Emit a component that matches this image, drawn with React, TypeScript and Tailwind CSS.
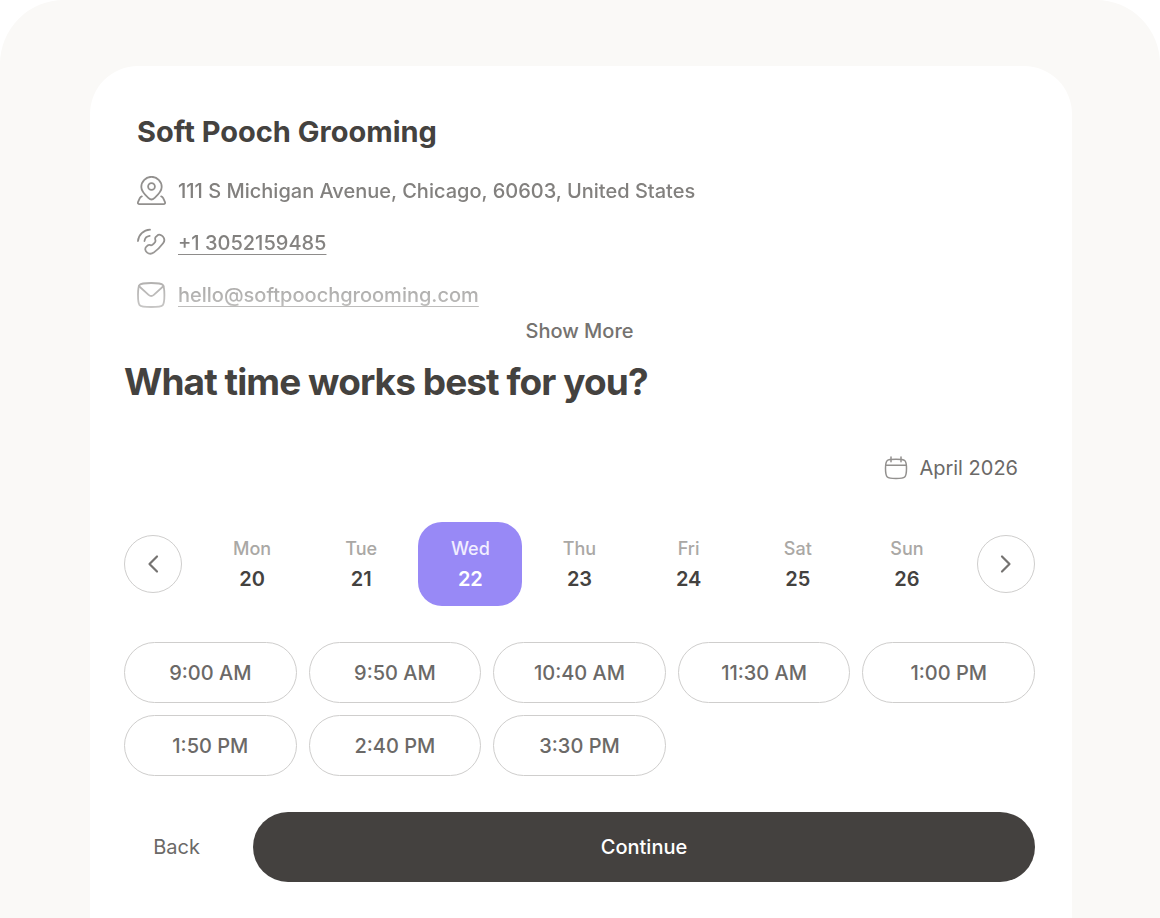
import React, { useState } from "react";

interface Day {
    label: string;
    date: number;
}

const days: Day[] = [
    { label: "Mon", date: 20 },
    { label: "Tue", date: 21 },
    { label: "Wed", date: 22 },
    { label: "Thu", date: 23 },
    { label: "Fri", date: 24 },
    { label: "Sat", date: 25 },
    { label: "Sun", date: 26 },
];

const slots = ["9:00 AM", "9:50 AM", "10:40 AM", "11:30 AM", "1:00 PM", "1:50 PM", "2:40 PM", "3:30 PM"];

const iconProps = {
    fill: "none",
    stroke: "currentColor",
    strokeWidth: 1.8,
    strokeLinecap: "round",
    strokeLinejoin: "round",
    "aria-hidden": true,
} as const;

function PinIcon() {
    return (
        <svg {...iconProps} viewBox="0 0 30 30" className="size-[30px] shrink-0 text-[#92908e]">
            <path d="M14.5 23.500c-1.200 0-2.200-.8-3.200-1.700C7.600 18.500 4.300 15.300 4.300 11a10.200 10.200 0 0 1 20.400 0c0 4.300-3.300 7.500-7 10.800-1 .9-2 1.700-3.200 1.700Z" />
            <circle cx="14.5" cy="10.500" r="3.400" />
            <path d="M4.800 20.300c-1 .2-1.500.9-2 1.900l-1.700 3.700c-.6 1.300.1 2.300 1.400 2.300h24c1.300 0 2-1 1.400-2.300l-1.700-3.700c-.5-1-1-1.700-2-1.900" />
        </svg>
    );
}

function PhoneIcon() {
    return (
        <svg {...iconProps} viewBox="0 0 30 30" className="size-[30px] shrink-0 text-[#92908e]">
            <path d="M1 13C1.500 7 6.500 2 13 1.700" />
            <path d="M7.500 13c.3-3 2.200-4.800 5.200-5.200" />
            <path d="m18.600 9.200 1.400-1.400c2-2 4.500-.9 5.900.7 1.700 2 1.900 4.500.2 6.700a46 46 0 0 1-9.400 9.400c-2.300 1.600-5 1.300-6.800-.3-1.700-1.500-2.400-3.900-.5-5.700l1.600-1.300c1-.8 2-.3 3 0 1.300.2 4.700-3.100 4.500-4.500-.1-1.100-.9-2.500.1-3.600Z" />
        </svg>
    );
}

function MailIcon() {
    return (
        <svg {...iconProps} viewBox="0 0 30 30" className="size-[30px] shrink-0 text-[#92908e]">
            <path d="M1 15c0-5 .1-8.300 1.600-10.100C4.200 3 8 3 14.200 3s10 0 11.600 1.900C27.300 6.700 27.400 10 27.400 15s-.1 8.300-1.600 10.100C24.200 27 20.400 27 14.200 27s-10 0-11.600-1.900C1.100 23.300 1 20 1 15Z" />
            <path d="m1.800 6 9.800 8.800c1.900 1.700 3.300 1.700 5.200 0L26.600 6" />
        </svg>
    );
}

function CalendarIcon() {
    return (
        <svg {...iconProps} strokeWidth={1.500} viewBox="0 0 24 24" className="size-6 text-[#92908e]">
            <path d="M1.500 12.500c0-4 .1-6.500 1.800-8C4.800 3.200 7.500 3.200 12 3.200s7.200 0 8.700 1.300c1.700 1.500 1.800 4 1.800 8s-.1 6.800-1.800 8.500C19.200 22.500 16.500 22.500 12 22.500s-7.200 0-8.700-1.500c-1.700-1.700-1.800-4.500-1.800-8.500Z" />
            <path d="M2 9.200h20M7 1v4.700M17 1v4.700" />
        </svg>
    );
}

function ArrowButton({ direction }: { direction: "left" | "right" }) {
    return (
        <button
            aria-label={direction === "left" ? "Previous week" : "Next week"}
            className="flex size-[58px] shrink-0 items-center justify-center rounded-full border border-[#cfcecd] text-[#757371]"
        >
            <svg {...iconProps} strokeWidth={2.200} viewBox="0 0 24 24" className="size-6">
                {direction === "left" ? <path d="m16 4.500-7.500 7.500 7.500 7.500" /> : <path d="m8 4.500 7.500 7.500-7.500 7.500" />}
            </svg>
        </button>
    );
}

export default function App() {
    const [selected, setSelected] = useState(22);

    return (
        <div className="min-h-screen rounded-t-[64px] bg-[#faf9f7] pt-[66px] pr-[88px] pl-[90px] font-['Inter',sans-serif] text-[#44423f]">
            <main className="min-h-[852px] rounded-t-[48px] bg-white pt-12 pr-[37px] pb-9 pl-[34px]">
                <section className="px-[13px]">
                    <h1 className="text-[29px] leading-9 font-bold">Soft Pooch Grooming</h1>
                    {/* the list fades out towards "Show More" */}
                    <address className="mt-[23px] flex flex-col gap-6 mask-[linear-gradient(to_bottom,black_50%,rgba(0,0,0,0.5)_100%)] pt-1 text-xl leading-7 font-medium text-[#82807e] not-italic">
                        <div className="flex h-7 items-center gap-[11px]">
                            <PinIcon />
                            <span>111 S Michigan Avenue, Chicago, 60603, United States</span>
                        </div>
                        <div className="flex h-7 items-center gap-[11px]">
                            <PhoneIcon />
                            <a href="tel:+13052159485" className="underline decoration-1 underline-offset-4">+1 3052159485</a>
                        </div>
                        <div className="flex h-7 items-center gap-[11px]">
                            <MailIcon />
                            <a href="mailto:hello@softpoochgrooming.com" className="underline decoration-1 underline-offset-4">hello@softpoochgrooming.com</a>
                        </div>
                    </address>
                </section>

                <button className="mx-auto mt-[10px] block text-xl leading-6 font-medium text-[#757370]">Show More</button>

                <h2 className="mt-[15px] text-[37px] leading-[48px] font-bold tracking-tight">What time works best for you?</h2>

                <div className="mt-[50px] flex justify-end pr-[17px]">
                    <button className="flex h-6 items-center gap-[11px] text-xl text-[#6b6967]">
                        <CalendarIcon />
                        April 2026
                    </button>
                </div>

                <div className="mt-[42px] flex items-center gap-[18px]">
                    <ArrowButton direction="left" />
                    <div className="grid flex-1 grid-cols-7 gap-[5px]">
                        {days.map((day) => {
                            const active = day.date === selected;
                            return (
                                <button
                                    key={day.date}
                                    aria-pressed={active}
                                    onClick={() => setSelected(day.date)}
                                    className={`flex h-[84px] flex-col items-center justify-center gap-1 rounded-3xl ${active ? "bg-[#9889f6] text-white" : ""}`}
                                >
                                    <span className={`text-lg leading-[26px] font-medium ${active ? "text-[#f1eeff]" : "text-[#aaa8a5]"}`}>{day.label}</span>
                                    <span className="text-xl leading-[26px] font-semibold">{day.date}</span>
                                </button>
                            );
                        })}
                    </div>
                    <ArrowButton direction="right" />
                </div>

                <div className="mt-9 grid grid-cols-5 gap-3">
                    {slots.map((slot) => (
                        <button key={slot} className="h-[61px] rounded-full border border-[#cfcecd] text-xl font-medium text-[#6b6967]">
                            {slot}
                        </button>
                    ))}
                </div>

                <div className="mt-9 flex gap-6">
                    <button className="w-[105px] text-xl text-[#6b6967]">Back</button>
                    <button className="h-[70px] flex-1 rounded-full bg-[#44413f] text-xl font-medium text-white">Continue</button>
                </div>
            </main>
        </div>
    );
}
